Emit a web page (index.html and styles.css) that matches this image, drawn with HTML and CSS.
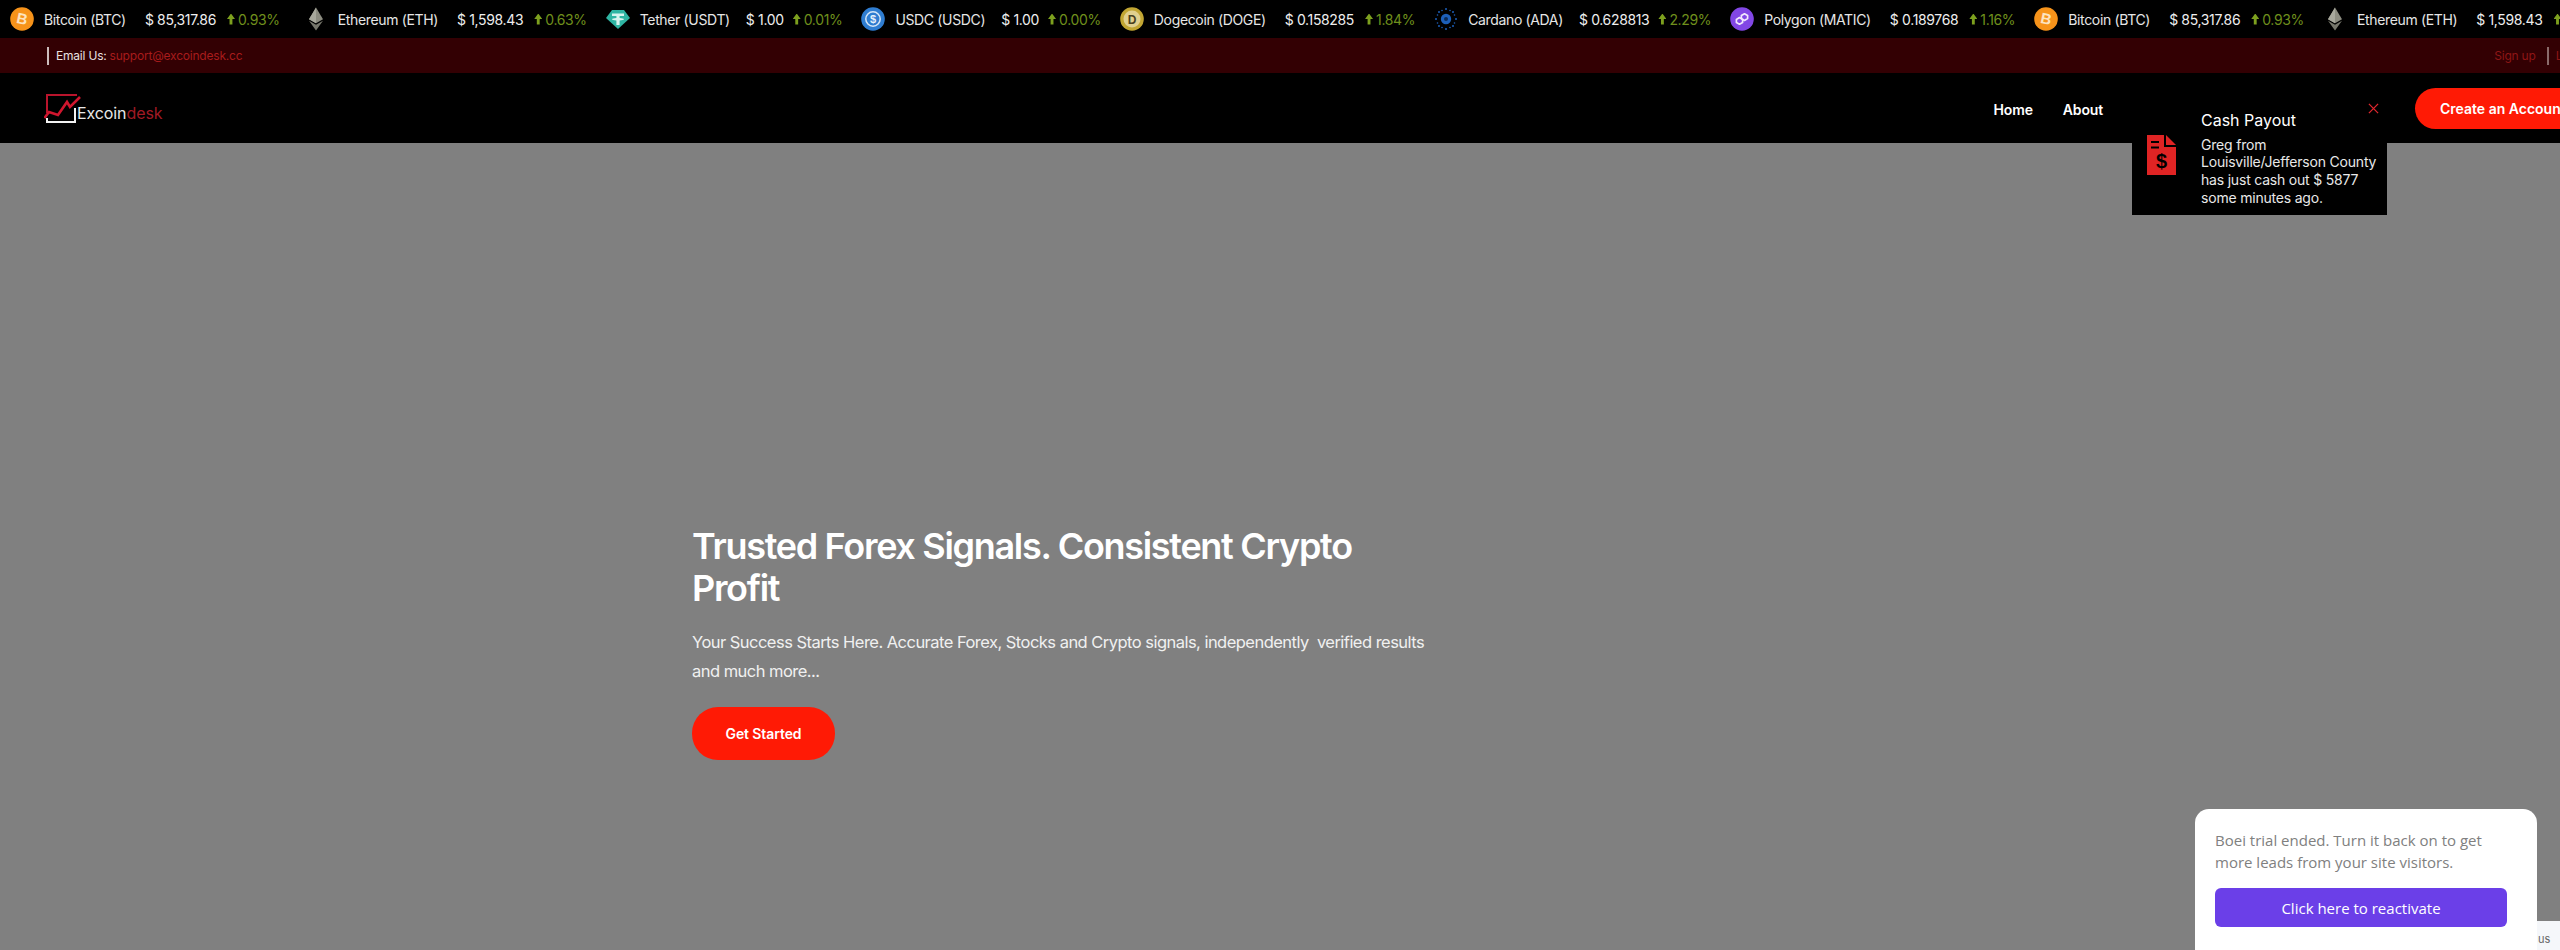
FILE: index.html
```html
<!DOCTYPE html>
<html lang="en">
<head>
  <meta charset="UTF-8" />
  <meta name="viewport" content="width=device-width, initial-scale=1.0"/>
  <title>Excoindesk</title>
  <link rel="stylesheet" href="styles.css">
</head>
<body>
  <svg class="defs" width="0" height="0">
    <symbol id="eth" viewBox="0 0 24 24">
      <path d="M12 0.5 L19 12.2 L12 16.3 L5 12.2Z" fill="#8c8c80"/>
      <path d="M12 0.5 L12 16.3 L5 12.2Z" fill="#a8a89c"/>
      <path d="M12 17.8 L19 13.7 L12 23.5 L5 13.7Z" fill="#77776c"/>
    </symbol>
    <symbol id="usdt" viewBox="0 0 24 24">
      <path d="M6 3 H18 L24 11 L12 22 L0 11Z" fill="#2fb5a3"/>
      <path d="M6 6.5 H18 V9 H13.6 V11 C16 11.2 18 11.7 18 12.3 C18 13 16 13.4 13.6 13.6 V18 H10.4 V13.6 C8 13.4 6 13 6 12.3 C6 11.7 8 11.2 10.4 11 V9 H6Z" fill="#d6f3ef"/>
    </symbol>
    <symbol id="ada" viewBox="0 0 24 24">
      <g fill="#1d5fb8">
        <circle cx="12" cy="12" r="5.2"/>
        <circle cx="12" cy="2" r="1"/><circle cx="12" cy="22" r="1"/>
        <circle cx="2" cy="12" r="1"/><circle cx="22" cy="12" r="1"/>
        <circle cx="5" cy="5" r="1"/><circle cx="19" cy="5" r="1"/>
        <circle cx="5" cy="19" r="1"/><circle cx="19" cy="19" r="1"/>
        <circle cx="8" cy="3.5" r=".8"/><circle cx="16" cy="3.5" r=".8"/>
        <circle cx="8" cy="20.5" r=".8"/><circle cx="16" cy="20.5" r=".8"/>
        <circle cx="3.5" cy="8" r=".8"/><circle cx="20.5" cy="8" r=".8"/>
        <circle cx="3.5" cy="16" r=".8"/><circle cx="20.5" cy="16" r=".8"/>
      </g>
      <circle cx="12" cy="12" r="2" fill="#0a2a55"/>
    </symbol>
    <symbol id="matic" viewBox="0 0 24 24">
      <circle cx="12" cy="12" r="11.8" fill="#8247e5"/>
      <g fill="none" stroke="#f1e8fd" stroke-width="1.7" stroke-linejoin="round">
        <path d="M9.5 10.6 L12.6 12.4 V15.4 L9.5 17.2 L6.4 15.4 V12.4Z"/>
        <path d="M14.5 6.8 L17.6 8.6 V11.6 L14.5 13.4 L11.4 11.6 V8.6Z"/>
      </g>
    </symbol>
  </svg>

  <div class="ticker">
    <div class="coin coin-first">
      <svg class="coin-icon" viewBox="0 0 24 24"><circle cx="12" cy="12" r="11.8" fill="#f7931a"/><text x="12" y="17" text-anchor="middle" font-size="15" font-weight="700" fill="#fde3c0" font-family="Liberation Sans" transform="rotate(12 12 12)">B</text></svg>
      <span class="coin-name">Bitcoin (BTC)</span><span class="coin-price">$ 85,317.86</span><span class="coin-change"><i class="up"></i>0.93%</span>
    </div>
    <div class="coin"><svg class="coin-icon"><use href="#eth"/></svg><span class="coin-name">Ethereum (ETH)</span><span class="coin-price">$ 1,598.43</span><span class="coin-change"><i class="up"></i>0.63%</span></div>
    <div class="coin coin-tight"><svg class="coin-icon"><use href="#usdt"/></svg><span class="coin-name">Tether (USDT)</span><span class="coin-price">$ 1.00</span><span class="coin-change"><i class="up"></i>0.01%</span></div>
    <div class="coin coin-tight">
      <svg class="coin-icon" viewBox="0 0 24 24"><circle cx="12" cy="12" r="11.8" fill="#2f7dd1"/><circle cx="12" cy="12" r="7.2" fill="none" stroke="#d5e6f7" stroke-width="1.5"/><text x="12" y="16" text-anchor="middle" font-size="11" font-weight="700" fill="#e6f0fa" font-family="Liberation Sans">$</text></svg>
      <span class="coin-name">USDC (USDC)</span><span class="coin-price">$ 1.00</span><span class="coin-change"><i class="up"></i>0.00%</span>
    </div>
    <div class="coin">
      <svg class="coin-icon" viewBox="0 0 24 24"><circle cx="12" cy="12" r="11.8" fill="#c2a633"/><circle cx="12" cy="12" r="8.5" fill="#e1d08f"/><text x="12" y="16.5" text-anchor="middle" font-size="12" font-weight="700" fill="#4a4020" font-family="Liberation Sans">D</text></svg>
      <span class="coin-name">Dogecoin (DOGE)</span><span class="coin-price">$ 0.158285</span><span class="coin-change"><i class="up"></i>1.84%</span>
    </div>
    <div class="coin coin-tight"><svg class="coin-icon"><use href="#ada"/></svg><span class="coin-name">Cardano (ADA)</span><span class="coin-price">$ 0.628813</span><span class="coin-change"><i class="up"></i>2.29%</span></div>
    <div class="coin"><svg class="coin-icon"><use href="#matic"/></svg><span class="coin-name">Polygon (MATIC)</span><span class="coin-price">$ 0.189768</span><span class="coin-change"><i class="up"></i>1.16%</span></div>
    <div class="coin">
      <svg class="coin-icon" viewBox="0 0 24 24"><circle cx="12" cy="12" r="11.8" fill="#f7931a"/><text x="12" y="17" text-anchor="middle" font-size="15" font-weight="700" fill="#fde3c0" font-family="Liberation Sans" transform="rotate(12 12 12)">B</text></svg>
      <span class="coin-name">Bitcoin (BTC)</span><span class="coin-price">$ 85,317.86</span><span class="coin-change"><i class="up"></i>0.93%</span>
    </div>
    <div class="coin"><svg class="coin-icon"><use href="#eth"/></svg><span class="coin-name">Ethereum (ETH)</span><span class="coin-price">$ 1,598.43</span><span class="coin-change"><i class="up"></i>0.63%</span></div>
  </div>

  <div class="topbar">
    <div class="topbar-left"><span class="pipe"></span>Email Us: <a href="#">support@excoindesk.cc</a></div>
    <div class="topbar-right"><a href="#" class="signup">Sign up</a><span class="pipe"></span><a href="#">Login</a></div>
  </div>

  <header class="navbar">
    <a href="#" class="logo">
      <svg class="logo-mark" viewBox="0 0 40 34">
        <path d="M3 22 V4 H33" fill="none" stroke="#b9142c" stroke-width="2"/>
        <path d="M3 27 V31 H31 V17" fill="none" stroke="#f2f2f2" stroke-width="2"/>
        <path d="M0.500 27 L5 21 L14 24 L23 11 L26 16 L36 6" fill="none" stroke="#d0162e" stroke-width="2.600"/>
      </svg>
      <span class="logo-text">Excoin<span class="logo-desk">desk</span></span>
    </a>
    <nav class="menu">
      <a href="#">Home</a>
      <a href="#">About</a>
    </nav>
    <a href="#" class="btn btn-account">Create an Account</a>
  </header>

  <main class="hero">
    <h1>Trusted Forex Signals. Consistent Crypto Profit</h1>
    <p>Your Success Starts Here. Accurate Forex, Stocks and Crypto signals, independently &nbsp;verified results and much more...</p>
    <a href="#" class="btn btn-start">Get Started</a>
  </main>

  <div class="toast">
    <svg class="toast-icon" viewBox="0 0 29 40">
      <path d="M0 0 H17 V12 H29 V40 H0Z" fill="#e02424"/>
      <path d="M19 0 L29 10 H19Z" fill="#e02424"/>
      <path d="M4 7 H12 M4 12.500 H12" stroke="#000" stroke-width="2.200"/>
      <text x="14.500" y="33" text-anchor="middle" font-size="20" font-weight="700" fill="#000" font-family="Liberation Sans">$</text>
    </svg>
    <div class="toast-body">
      <h4>Cash Payout</h4>
      <p>Greg from Louisville/Jefferson County has just cash out $ 5877 some minutes ago.</p>
    </div>
    <svg class="toast-close" viewBox="0 0 12 12"><path d="M1 1 L11 11 M11 1 L1 11" stroke="#e0262e" stroke-width="1.400"/></svg>
  </div>

  <div class="boei">
    <p>Boei trial ended. Turn it back on to get more leads from your site visitors.</p>
    <a href="#" class="boei-btn">Click here to reactivate</a>
  </div>
  <div class="recaptcha">us</div>
</body>
</html>
```

FILE: styles.css
```css
* {
  box-sizing: border-box;
}
html, body {
  height: 100%;
}
body {
  margin: 0;
  overflow: hidden;
  background: #808080;
  color: #fff;
  font-family: Inter, Roboto, sans-serif;
  display: flex;
  flex-direction: column;
}
a {
  text-decoration: none;
  color: inherit;
}
.defs {
  position: absolute;
}

/* price ticker */
.ticker {
  height: 38px;
  flex: none;
  background: #000;
  display: flex;
  align-items: center;
  gap: 19px;
  padding-left: 10px;
  font-size: 14px;
  letter-spacing: -0.35px;
  white-space: nowrap;
  overflow: hidden;
}
.coin {
  display: flex;
  align-items: center;
  flex: none;
}
.coin-first {
  margin-right: 5px;
}
.coin-icon {
  width: 24px;
  height: 24px;
  margin-right: 10px;
}
.coin-name {
  margin-right: 19px;
  color: #e6e6e6;
}
.coin-price {
  margin-right: 11px;
  color: #eee;
}
.coin-tight .coin-name {
  margin-right: 16px;
}
.coin-tight .coin-price {
  margin-right: 9px;
}
.coin-change {
  color: #6f8f1c;
  display: flex;
  align-items: center;
}
.up {
  width: 8px;
  height: 11px;
  margin-right: 3px;
  background: #7da01e;
  clip-path: polygon(50% 0, 100% 50%, 68% 50%, 68% 100%, 32% 100%, 32% 50%, 0 50%);
}

/* email bar */
.topbar {
  height: 35px;
  flex: none;
  background: #330003;
  padding-left: 47px;
  display: flex;
  align-items: center;
  justify-content: space-between;
  font-size: 12px;
  letter-spacing: -0.2px;
  white-space: nowrap;
  width: 2586px;
}
.topbar-left {
  display: flex;
  align-items: center;
  gap: 3px;
  color: #e8e0e0;
}
.topbar-left a {
  color: #a81c1c;
}
.topbar-left .pipe {
  margin-right: 4px;
}
.pipe {
  width: 2px;
  height: 18px;
  background: #cbbcbc;
}
.topbar-right {
  display: flex;
  align-items: center;
  gap: 7px;
  color: #8f1616;
}
.signup {
  margin-right: 4px;
}
.topbar-right .pipe {
  background: #8a6a6a;
}

/* nav */
.navbar {
  height: 70px;
  flex: none;
  width: 2600px;
  background: #000;
  display: flex;
  align-items: center;
  padding-left: 44px;
}
.logo {
  display: flex;
  align-items: flex-start;
  height: 34px;
  margin-top: -1px;
}
.logo-mark {
  width: 40px;
  height: 34px;
  margin-right: -7px;
}
.logo-text {
  font-size: 16px;
  line-height: 20px;
  letter-spacing: -0.1px;
  color: #e8e8e8;
  margin-top: 12px;
}
.logo-desk {
  color: #a11a24;
}
.menu {
  margin-left: auto;
  margin-top: 3px;
  display: flex;
  gap: 30px;
  font-size: 14px;
  font-weight: 600;
  letter-spacing: -0.15px;
}
.btn {
  background: #ff1a05;
  color: #fff;
  font-size: 14px;
  font-weight: 600;
  display: flex;
  align-items: center;
  justify-content: center;
  border-radius: 26px;
}
.btn-account {
  width: 185px;
  height: 41px;
  margin-left: 312px;
  margin-top: 1px;
  padding: 0 25px;
  justify-content: flex-start;
}

/* hero */
.hero {
  flex: 1;
  padding-left: 692px;
  padding-top: 382px;
}
.hero h1 {
  margin: 0 0 19px;
  width: 740px;
  font-size: 36px;
  line-height: 42px;
  font-weight: 600;
  letter-spacing: -1.3px;
}
.hero p {
  margin: 0 0 21px;
  width: 740px;
  font-size: 16.500px;
  line-height: 29px;
  letter-spacing: -0.53px;
  color: #f0f0f0;
}
.btn-start {
  width: 143px;
  height: 53px;
  letter-spacing: -0.1px;
}

/* payout popup */
.toast {
  position: absolute;
  left: 2132px;
  top: 100px;
  width: 255px;
  height: 115px;
  background: #000;
  display: flex;
}
.toast-icon {
  width: 29px;
  height: 40px;
  margin: 35px 0 0 15px;
  flex: none;
}
.toast-body {
  margin-left: 25px;
  width: 178px;
  padding-top: 10px;
}
.toast-body h4 {
  margin: 0 0 5.500px;
  font-size: 16px;
  line-height: 20px;
  font-weight: 400;
}
.toast-body p {
  margin: 0;
  font-size: 14px;
  line-height: 17.700px;
  letter-spacing: -0.2px;
  color: #e8e8e8;
}
.toast-close {
  position: absolute;
  right: 8px;
  top: 3px;
  width: 11px;
  height: 11px;
}

/* chat widget */
.boei {
  position: absolute;
  left: 2195px;
  top: 809px;
  width: 342px;
  height: 160px;
  background: #fff;
  border-radius: 14px;
  padding: 20px 30px 20px 20px;
  font-family: "Open Sans", sans-serif;
}
.boei p {
  margin: 0 0 15px;
  font-size: 15px;
  line-height: 22px;
  color: #808080;
}
.boei-btn {
  display: flex;
  align-items: center;
  justify-content: center;
  height: 39px;
  border-radius: 6px;
  background: #6b3fe8;
  font-size: 15px;
  font-weight: 500;
}
.recaptcha {
  position: absolute;
  left: 2537px;
  top: 921px;
  width: 23px;
  height: 29px;
  background: #f5f7fa;
  color: #666;
  font-size: 11px;
  padding: 11px 0 0 1px;
}
```
